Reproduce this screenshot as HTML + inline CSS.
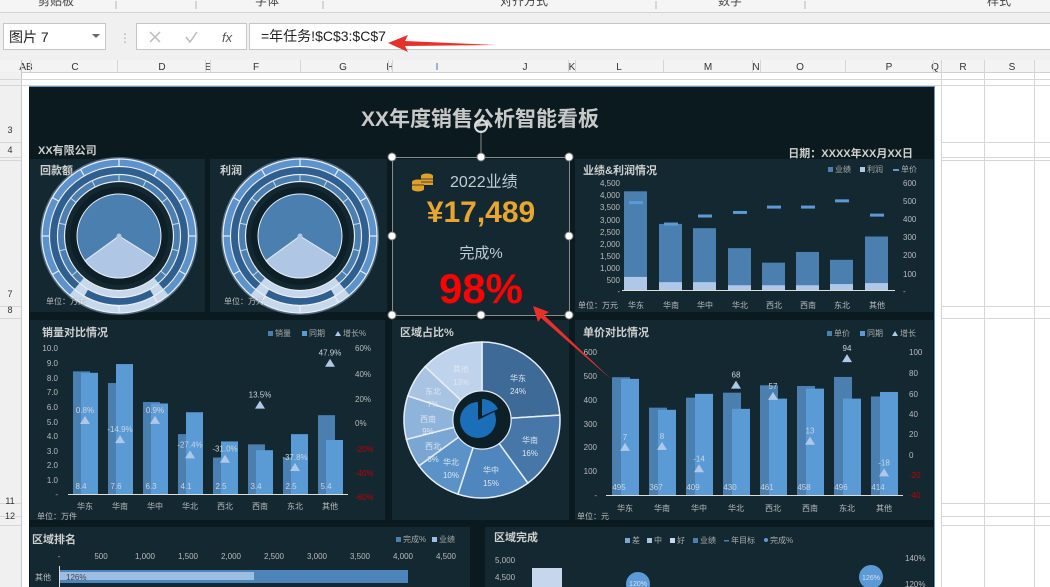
<!DOCTYPE html>
<html><head><meta charset="utf-8">
<style>
html,body{margin:0;padding:0;width:1050px;height:587px;overflow:hidden;background:#fff;font-family:"Liberation Sans","Noto Sans CJK SC",sans-serif}
svg{position:absolute;left:0;top:0}
text{font-family:"Liberation Sans","Noto Sans CJK SC",sans-serif}
</style></head><body>
<svg id="s" width="1050" height="587" viewBox="0 0 1050 587" xmlns="http://www.w3.org/2000/svg">
<!-- excel chrome -->
<rect x="0" y="0" width="1050" height="60" fill="#f0f0f0"/>
<rect x="0" y="0" width="1050" height="12" fill="#f5f5f5"/>
<line x1="0" y1="12.5" x2="1050" y2="12.5" stroke="#d4d4d4"/>
<g font-size="12" fill="#444">
<text x="38" y="5">剪贴板</text><text x="255" y="5">字体</text><text x="500" y="5">对齐方式</text><text x="718" y="5">数字</text><text x="987" y="5">样式</text>
</g>
<g stroke="#b8b8b8" fill="none"><path d="M116 1v8M196 1v8M323 1v8M656 1v8M805 1v8"/></g>
<rect x="3.5" y="23.5" width="102" height="26" fill="#fff" stroke="#c6c6c6"/>
<text x="9" y="42" font-size="14" fill="#222">图片 7</text>
<path d="M92 34l4 4 4-4z" fill="#666"/>
<text x="119" y="42" font-size="12" fill="#aaa">⋮</text>
<rect x="136.5" y="23.5" width="110" height="26" fill="#fff" stroke="#c6c6c6"/>
<path d="M150 32l10 10M160 32l-10 10" stroke="#bbb" stroke-width="1.5"/>
<path d="M186 37l4 5 7-10" stroke="#bbb" stroke-width="1.5" fill="none"/>
<text x="222" y="42" font-size="13" font-style="italic" font-family="Liberation Serif" fill="#555">fx</text>
<rect x="249.5" y="23.5" width="801" height="26" fill="#fff" stroke="#c6c6c6"/>
<text x="261" y="41" font-size="14" fill="#222">=年任务!$C$3:$C$7</text>
<path d="M388 43 L408 35 L405 41 L496 45 L405 46 L408 52 Z" fill="#e8302a"/>
<rect x="0" y="60" width="1050" height="12" fill="#f3f3f3"/>
<line x1="0" y1="72.5" x2="1050" y2="72.5" stroke="#d0d0d0"/>
<g font-size="10" fill="#333" text-anchor="middle">
<text x="26" y="70">AB</text><text x="75" y="70">C</text><text x="162" y="70">D</text><text x="208" y="70">E</text><text x="256" y="70">F</text><text x="343" y="70">G</text><text x="390" y="70">H</text><text x="437" y="70" fill="#3b6fb0">I</text><text x="525" y="70">J</text><text x="572" y="70">K</text><text x="619" y="70">L</text><text x="708" y="70">M</text><text x="756" y="70">N</text><text x="800" y="70">O</text><text x="889" y="70">P</text><text x="935" y="70">Q</text><text x="963" y="70">R</text><text x="1012" y="70">S</text>
</g>
<g stroke="#d6d6d6"><path d="M30.5 60v12M117.5 60v12M205.5 60v12M210.5 60v12M300.5 60v12M388.5 60v12M392.5 60v12M568.5 60v12M575.5 60v12M663.5 60v12M752.5 60v12M760.5 60v12M845.5 60v12M933.5 60v12M941.5 60v12M984.5 60v12M1034.5 60v12"/></g>
<rect x="0" y="72" width="21" height="515" fill="#f0f0f0"/>
<line x1="21.5" y1="60" x2="21.5" y2="587" stroke="#c8c8c8"/>
<g stroke="#d6d6d6"><path d="M0 79.5h1050M0 85.5h1050M941 142.5h109M941 157.5h109M941 160.5h109M941 306.5h109M941 318.5h109M941 503.5h109M941 516.5h109M941 525.5h109M941.5 72v515M984.5 72v515M1034.5 72v515"/>
<path d="M0 142.5h21M0 157.5h21M0 160.5h21M0 306.5h21M0 318.5h21M0 503.5h21M0 516.5h21M0 525.5h21"/></g>
<g font-size="9" fill="#333" text-anchor="middle">
<text x="10" y="133">3</text><text x="10" y="153">4</text><text x="10" y="297">7</text><text x="10" y="313">8</text><text x="10" y="504">11</text><text x="10" y="519">12</text></g>

<!-- dashboard -->
<rect x="29" y="86" width="905" height="501" fill="#0a1a1f"/>
<line x1="29" y1="86.5" x2="934" y2="86.5" stroke="#6a93bd"/>
<line x1="934.5" y1="86" x2="934.5" y2="587" stroke="#6a93bd"/>
<text x="480" y="126" font-size="21" font-weight="bold" fill="#c9c9c9" text-anchor="middle">XX年度销售公析智能看板</text>
<text x="38" y="154" font-size="11" font-weight="bold" fill="#cfcfcf">XX有限公司</text>
<text x="913" y="157" font-size="11" font-weight="bold" fill="#cfcfcf" text-anchor="end">日期：XXXX年XX月XX日</text>

<g fill="#132831">
<rect x="30" y="159" width="175" height="153"/>
<rect x="210" y="159" width="177" height="153"/>
<rect x="392" y="159" width="177" height="156"/>
<rect x="575" y="159" width="358" height="153"/>
<rect x="30" y="320" width="355" height="200"/>
<rect x="392" y="320" width="177" height="200"/>
<rect x="575" y="320" width="358" height="200"/>
<rect x="30" y="527" width="440" height="60"/>
<rect x="485" y="527" width="448" height="60"/>
</g>
<text x="40" y="174" font-size="11" font-weight="bold" fill="#cfcfcf">回款额</text>
<text x="220" y="174" font-size="11" font-weight="bold" fill="#cfcfcf">利润</text>
<g id="gauges"></g>
<text x="46" y="304" font-size="8" fill="#bbb">单位：万元</text>
<text x="224" y="304" font-size="8" fill="#bbb">单位：万元</text>

<!-- KPI -->
<g fill="#e0a02a"><ellipse cx="427" cy="176" rx="6" ry="2.5"/><rect x="421" y="176" width="12" height="9"/><ellipse cx="418" cy="182" rx="6" ry="2.5"/><rect x="412" y="182" width="12" height="7"/><ellipse cx="418" cy="189" rx="6" ry="2.5"/></g>
<g stroke="#132831" stroke-width="0.8" fill="none"><path d="M421 179h12M421 182h12M412 185h12"/></g>
<text x="450" y="187" font-size="16" fill="#c3cdd4">2022业绩</text>
<text x="481" y="222" font-size="30" font-weight="bold" fill="#e8a530" text-anchor="middle">¥17,489</text>
<text x="481" y="258" font-size="15" fill="#c3cdd4" text-anchor="middle">完成%</text>
<text x="481" y="303" font-size="42" font-weight="bold" fill="#ff0000" text-anchor="middle">98%</text>
<rect x="392.5" y="157.5" width="177" height="158" fill="none" stroke="#8a8a8a"/>
<line x1="481" y1="130" x2="481" y2="157" stroke="#8a8a8a"/>
<circle cx="481" cy="126" r="6" fill="none" stroke="#ddd" stroke-width="2"/>
<g fill="#fff" stroke="#777"><circle cx="392" cy="157" r="4"/><circle cx="481" cy="157" r="4"/><circle cx="569" cy="157" r="4"/><circle cx="392" cy="236" r="4"/><circle cx="569" cy="236" r="4"/><circle cx="392" cy="315" r="4"/><circle cx="481" cy="315" r="4"/><circle cx="569" cy="315" r="4"/></g>

<!-- chart 业绩&利润 -->
<text x="583" y="174" font-size="11" font-weight="bold" fill="#cfcfcf">业绩&amp;利润情况</text>
<g font-size="8" fill="#aaa"><rect x="828" y="167" width="5" height="5" fill="#4a7fb0"/><text x="835" y="172">业绩</text><rect x="860" y="167" width="5" height="5" fill="#b0c8e8"/><text x="867" y="172">利润</text><rect x="893" y="169" width="6" height="2" fill="#5b9bd5"/><text x="901" y="172">单价</text></g>
<g font-size="8" fill="#bbb" text-anchor="end">
<text x="620" y="186">4,500</text><text x="620" y="198">4,000</text><text x="620" y="210">3,500</text><text x="620" y="223">3,000</text><text x="620" y="235">2,500</text><text x="620" y="247">2,000</text><text x="620" y="259">1,500</text><text x="620" y="271">1,000</text><text x="620" y="283">500</text><text x="620" y="294">-</text></g>
<g font-size="8" fill="#bbb"><text x="903" y="186">600</text><text x="903" y="204">500</text><text x="903" y="222">400</text><text x="903" y="240">300</text><text x="903" y="258">200</text><text x="903" y="277">100</text><text x="903" y="294">-</text></g>
<g id="c4"></g>
<line x1="622" y1="290.5" x2="895" y2="290.5" stroke="#ddd"/>
<g font-size="8" fill="#bbb" text-anchor="middle"><text x="598" y="308">单位：万元</text><text x="636" y="308">华东</text><text x="671" y="308">华南</text><text x="705" y="308">华中</text><text x="740" y="308">华北</text><text x="774" y="308">西北</text><text x="808" y="308">西南</text><text x="842" y="308">东北</text><text x="877" y="308">其他</text></g>

<!-- chart 销量对比 -->
<text x="42" y="336" font-size="11" font-weight="bold" fill="#cfcfcf">销量对比情况</text>
<g font-size="8" fill="#aaa"><rect x="268" y="331" width="5" height="5" fill="#4a7fb0"/><text x="275" y="336">销量</text><rect x="302" y="331" width="5" height="5" fill="#5b9bd5"/><text x="309" y="336">同期</text><path d="M335 336l3-5 3 5z" fill="#b0c8e8"/><text x="343" y="336">增长%</text></g>
<g font-size="8" fill="#bbb" text-anchor="end"><text x="58" y="351">10.0</text><text x="58" y="366">9.0</text><text x="58" y="381">8.0</text><text x="58" y="395">7.0</text><text x="58" y="410">6.0</text><text x="58" y="425">5.0</text><text x="58" y="439">4.0</text><text x="58" y="454">3.0</text><text x="58" y="468">2.0</text><text x="58" y="483">1.0</text><text x="58" y="497">-</text></g>
<g font-size="8" text-anchor="start"><text x="355" y="351" fill="#bbb">60%</text><text x="355" y="377" fill="#bbb">40%</text><text x="355" y="402" fill="#bbb">20%</text><text x="355" y="426" fill="#bbb">0%</text><text x="355" y="452" fill="#c00000">-20%</text><text x="355" y="476" fill="#c00000">-40%</text><text x="355" y="500" fill="#c00000">-60%</text></g>
<g id="c5"></g>
<line x1="68" y1="494.5" x2="348" y2="494.5" stroke="#ddd"/>
<g font-size="8" fill="#bbb" text-anchor="middle"><text x="85" y="509">华东</text><text x="120" y="509">华南</text><text x="155" y="509">华中</text><text x="190" y="509">华北</text><text x="225" y="509">西北</text><text x="260" y="509">西南</text><text x="295" y="509">东北</text><text x="330" y="509">其他</text><text x="57" y="519">单位：万件</text></g>

<!-- pie -->
<text x="400" y="336" font-size="11" font-weight="bold" fill="#cfcfcf">区域占比%</text>
<g id="pie"></g>
<circle cx="482" cy="420" r="29" fill="#0e2027" stroke="#dfe8f2" stroke-width="1"/>
<circle cx="478" cy="420" r="18" fill="#1a6fb8"/>
<path d="M478 420 L478 402 A18 18 0 0 1 494 412 Z" fill="#0e2027"/>
<path d="M482 416 L482 399 A18 18 0 0 1 498 409 Z" fill="#1a6fb8"/>
<g font-size="8" fill="#dde6ef" text-anchor="middle">
<text x="518" y="381">华东</text><text x="518" y="394">24%</text>
<text x="530" y="443">华南</text><text x="530" y="456">16%</text>
<text x="491" y="473">华中</text><text x="491" y="486">15%</text>
<text x="451" y="465">华北</text><text x="451" y="478">10%</text>
<text x="433" y="449">西北</text><text x="433" y="462">6%</text>
<text x="428" y="422">西南</text><text x="428" y="434">9%</text>
<text x="433" y="394">东北</text><text x="433" y="407">7%</text>
<text x="461" y="372">其他</text><text x="461" y="385">13%</text></g>

<!-- chart 单价 -->
<text x="583" y="336" font-size="11" font-weight="bold" fill="#cfcfcf">单价对比情况</text>
<g font-size="8" fill="#aaa"><rect x="827" y="331" width="5" height="5" fill="#4a7fb0"/><text x="834" y="336">单价</text><rect x="860" y="331" width="5" height="5" fill="#5b9bd5"/><text x="867" y="336">同期</text><path d="M892 336l3-5 3 5z" fill="#b0c8e8"/><text x="900" y="336">增长</text></g>
<g font-size="8" fill="#bbb" text-anchor="end"><text x="597" y="355">600</text><text x="597" y="379">500</text><text x="597" y="403">400</text><text x="597" y="427">300</text><text x="597" y="450">200</text><text x="597" y="474">100</text><text x="597" y="498">-</text></g>
<g font-size="8"><text x="909" y="355" fill="#bbb">100</text><text x="909" y="376" fill="#bbb">80</text><text x="909" y="397" fill="#bbb">60</text><text x="909" y="417" fill="#bbb">40</text><text x="909" y="437" fill="#bbb">20</text><text x="909" y="458" fill="#bbb">0</text><text x="909" y="478" fill="#c00000">-20</text><text x="909" y="498" fill="#c00000">-40</text></g>
<g id="c6"></g>
<line x1="606" y1="495.5" x2="903" y2="495.5" stroke="#ddd"/>
<g font-size="8" fill="#bbb" text-anchor="middle"><text x="625" y="511">华东</text><text x="662" y="511">华南</text><text x="699" y="511">华中</text><text x="736" y="511">华北</text><text x="773" y="511">西北</text><text x="810" y="511">西南</text><text x="847" y="511">东北</text><text x="884" y="511">其他</text><text x="593" y="519">单位：元</text></g>

<!-- bottom -->
<text x="32" y="543" font-size="11" font-weight="bold" fill="#cfcfcf">区域排名</text>
<g font-size="8" fill="#aaa"><rect x="396" y="537" width="5" height="5" fill="#4a7fb0"/><text x="403" y="542">完成%</text><rect x="432" y="537" width="5" height="5" fill="#9dbde2"/><text x="439" y="542">业绩</text></g>
<g font-size="8" fill="#bbb" text-anchor="middle"><text x="59" y="559">-</text><text x="101" y="559">500</text><text x="145" y="559">1,000</text><text x="188" y="559">1,500</text><text x="231" y="559">2,000</text><text x="274" y="559">2,500</text><text x="317" y="559">3,000</text><text x="360" y="559">3,500</text><text x="403" y="559">4,000</text><text x="446" y="559">4,500</text><text x="43" y="580">其他</text></g>
<line x1="59.5" y1="566" x2="59.5" y2="587" stroke="#ddd"/>
<rect x="60" y="570" width="348" height="13" fill="#4d85ba"/>
<rect x="60" y="572" width="194" height="8" fill="#9dbde2"/>
<text x="66" y="580" font-size="8" fill="#445">126%</text>
<text x="494" y="541" font-size="11" font-weight="bold" fill="#cfcfcf">区域完成</text>
<g font-size="8" fill="#aaa"><rect x="625" y="538" width="5" height="5" fill="#7aa6d4"/><text x="632" y="543">差</text><rect x="647" y="538" width="5" height="5" fill="#a9c4e3"/><text x="654" y="543">中</text><rect x="670" y="538" width="5" height="5" fill="#c8d8ec"/><text x="677" y="543">好</text><rect x="693" y="538" width="5" height="5" fill="#4a7fb0"/><text x="700" y="543">业绩</text><rect x="724" y="540" width="5" height="1.5" fill="#4a7fb0"/><text x="731" y="543">年目标</text><circle cx="766" cy="540" r="2" fill="#5b9bd5"/><text x="770" y="543">完成%</text></g>
<g font-size="8" fill="#bbb"><text x="495" y="563">5,000</text><text x="495" y="580">4,500</text><text x="905" y="561">140%</text><text x="905" y="587">120%</text></g>
<rect x="532" y="568" width="30" height="19" fill="#c6d7ed"/>
<circle cx="638" cy="584" r="12" fill="#5b9bd5"/><text x="638" y="586" font-size="7" fill="#dde" text-anchor="middle">120%</text>
<circle cx="871" cy="577" r="12" fill="#5b9bd5"/><text x="871" y="580" font-size="7" fill="#dde" text-anchor="middle">126%</text>

<!-- red arrow 2 -->
<path d="M533 306 L549 312 L544 315 L612 380 L541 318 L538 322 Z" fill="#e8302a"/>
</svg>
<script>
var NS="http://www.w3.org/2000/svg";
function el(p,t,a){var e=document.createElementNS(NS,t);for(var k in a)e.setAttribute(k,a[k]);document.getElementById(p).appendChild(e);return e;}
function pt(cx,cy,r,deg){var a=(deg-90)*Math.PI/180;return [cx+r*Math.cos(a),cy+r*Math.sin(a)];}
function arc(cx,cy,r1,r2,a1,a2){var p1=pt(cx,cy,r2,a1),p2=pt(cx,cy,r2,a2),p3=pt(cx,cy,r1,a2),p4=pt(cx,cy,r1,a1);var l=(a2-a1)>180?1:0;
return "M"+p1+" A"+r2+" "+r2+" 0 "+l+" 1 "+p2+" L"+p3+" A"+r1+" "+r1+" 0 "+l+" 0 "+p4+"Z";}
// gauges
[[119,236],[300,236]].forEach(function(c){
 var cx=c[0],cy=c[1];
 el("gauges","circle",{cx:cx,cy:cy,r:78,fill:"none",stroke:"#8fb0d4","stroke-width":2,opacity:0.5});
 el("gauges","path",{d:arc(cx,cy,70,77,0,359.9),fill:"#5d93cc"});
 el("gauges","path",{d:arc(cx,cy,62,69,0,359.9),fill:"#2f5f8e"});
 el("gauges","path",{d:arc(cx,cy,55,61,0,359.9),fill:"#4a7fb0"});
 el("gauges","path",{d:arc(cx,cy,55,77,140,220),fill:"#c8d8ec"});
 el("gauges","path",{d:arc(cx,cy,62,69,150,210),fill:"#2f5f8e"});
 [77,69.5,61.5,54.5].forEach(function(r){el("gauges","circle",{cx:cx,cy:cy,r:r,fill:"none",stroke:"#e8eef5","stroke-width":1.2});});
 for(var a=0;a<360;a+=30){var p=pt(cx,cy,69.5,a),q=pt(cx,cy,77,a);el("gauges","line",{x1:p[0],y1:p[1],x2:q[0],y2:q[1],stroke:"#e8eef5","stroke-width":1.2});}
 for(var a=-130;a<=130;a+=26){var p=pt(cx,cy,54.5,a),q=pt(cx,cy,61.5,a);el("gauges","line",{x1:p[0],y1:p[1],x2:q[0],y2:q[1],stroke:"#c8d8ec","stroke-width":1});}
 el("gauges","circle",{cx:cx,cy:cy,r:54,fill:"none",stroke:"#0e2027","stroke-width":0});
 el("gauges","circle",{cx:cx,cy:cy,r:49,fill:"#0e2027"});
 el("gauges","circle",{cx:cx,cy:cy,r:42,fill:"#4a7fb0",stroke:"#e8eef5","stroke-width":1});
 el("gauges","path",{d:"M"+cx+" "+cy+" L"+pt(cx,cy,42,122)+" A42 42 0 0 1 "+pt(cx,cy,42,234)+"Z",fill:"#afc6e4",stroke:"#e8eef5","stroke-width":1});
 el("gauges","circle",{cx:cx,cy:cy,r:2.5,fill:"#b0c8e8"});
});
// chart 业绩
var cx4=[636,671,705,740,774,808,842,877],v4=[4150,2780,2600,1760,1150,1600,1270,2250],p4=[550,330,330,200,200,200,250,290],u4=[490,370,415,435,465,465,500,420];
cx4.forEach(function(c,i){var h=v4[i]*0.02378;el("c4","rect",{x:c-12,y:290-h,width:23,height:h,fill:"#4a7fb0"});
 var h2=p4[i]*0.02378;el("c4","rect",{x:c-12,y:290-h2,width:23,height:h2,fill:"#b0c8e8"});
 var y=290-u4[i]*0.1783;el("c4","rect",{x:c-7,y:y-1.5,width:14,height:3,fill:"#5b9bd5"});});
// chart 销量
var cx5=[85,120,155,190,225,260,295,330],a5=[8.4,7.6,6.3,4.1,2.5,3.4,2.5,5.4],b5=[8.3,8.9,6.2,5.6,3.6,3.0,4.1,3.7],g5=[0.8,-14.9,0.9,-27.4,-31.0,13.5,-37.8,47.9];
cx5.forEach(function(c,i){var h=a5[i]*14.6;el("c5","rect",{x:c-12,y:494-h,width:17,height:h,fill:"#4a7fb0"});
 var h2=b5[i]*14.6;el("c5","rect",{x:c-4,y:494-h2,width:17,height:h2,fill:"#5b9bd5"});
 var t=el("c5","text",{x:c-4,y:489,"font-size":8,fill:"#c8d4e0","text-anchor":"middle"});t.textContent=a5[i].toFixed(1);
 var y=421-g5[i]*1.217;el("c5","path",{d:"M"+(c-5)+" "+(y+4)+"l5-8 5 8z",fill:"#b0c8e8"});
 var t2=el("c5","text",{x:c,y:y-7,"font-size":8,fill:"#c8d4e0","text-anchor":"middle"});t2.textContent=g5[i].toFixed(1)+"%";});
// pie
var fr=[24,16,15,10,6,9,7,13],col=["#3d6a96","#4677a8","#4f86bd","#5b93c9","#7aa6d4","#8fb4db","#a9c4e3","#c0d3ec"],acc=0;
fr.forEach(function(f,i){var a1=acc*3.6,a2=(acc+f)*3.6;acc+=f;el("pie","path",{d:arc(482,420,29,78,a1,a2),fill:col[i],stroke:"#e8eef5","stroke-width":1.5});});
// chart 单价
var cx6=[625,662,699,736,773,810,847,884],a6=[495,367,409,430,461,458,496,414],b6=[488,358,425,362,405,447,405,433],g6=[7,8,-14,68,57,13,94,-18];
cx6.forEach(function(c,i){var h=a6[i]*0.238;el("c6","rect",{x:c-13,y:495-h,width:18,height:h,fill:"#4a7fb0"});
 var h2=b6[i]*0.238;el("c6","rect",{x:c-4,y:495-h2,width:18,height:h2,fill:"#5b9bd5"});
 var t=el("c6","text",{x:c-6,y:490,"font-size":8,fill:"#c8d4e0","text-anchor":"middle"});t.textContent=a6[i];
 var y=454-g6[i]*1.02;el("c6","path",{d:"M"+(c-5)+" "+(y+4)+"l5-8 5 8z",fill:"#b0c8e8"});
 var t2=el("c6","text",{x:c,y:y-7,"font-size":8,fill:"#c8d4e0","text-anchor":"middle"});t2.textContent=g6[i];});
</script>
</body></html>
